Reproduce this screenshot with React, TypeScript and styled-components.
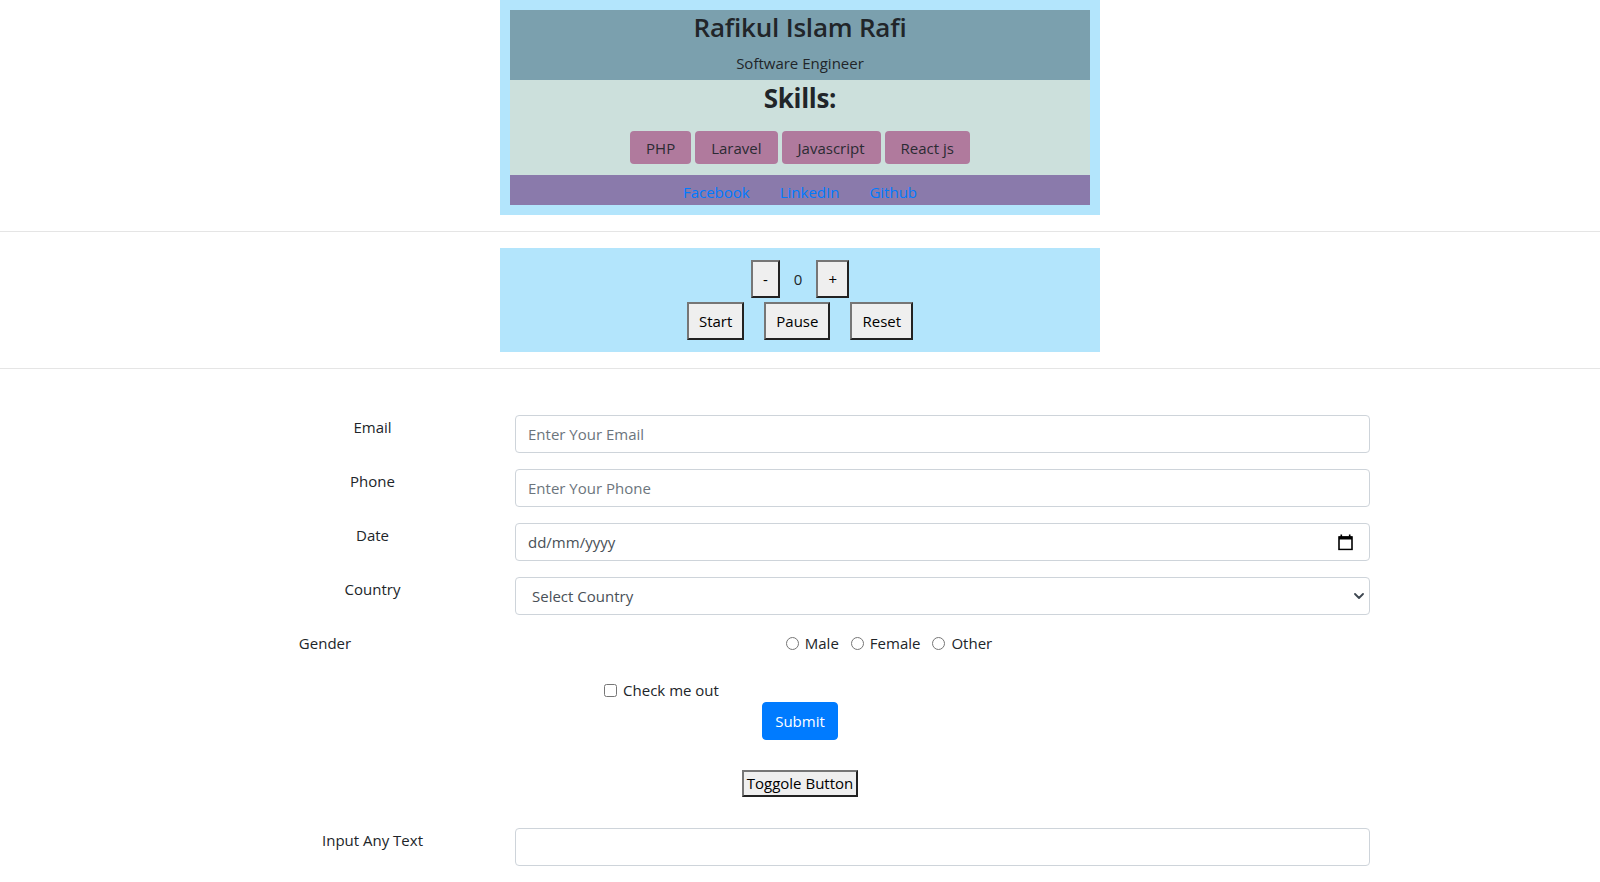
import styled, { createGlobalStyle, css } from 'styled-components';

const GlobalStyle = createGlobalStyle`
  *, *::before, *::after {
    box-sizing: border-box;
  }
  body {
    margin: 0;
    background: #fff;
    color: #212529;
    font-family: "Open Sans", "Liberation Sans", sans-serif;
    font-size: 15px;
    line-height: 24px;
  }
`;

const Page = styled.div`
  width: 100%;
`;

/* profile card */

const ProfileCard = styled.section`
  width: 600px;
  margin: 0 auto;
  padding: 10px;
  background: #b3e5fc;
`;

const CardHeader = styled.header`
  background: #7ba0ae;
  text-align: center;
  padding-bottom: 5px;
`;

const Name = styled.h3`
  margin: 0;
  font-size: 26px;
  font-weight: 600;
  line-height: 35px;
  letter-spacing: -0.2px;
`;

const Role = styled.p`
  margin: 6px 0 0;
  line-height: 24px;
`;

const SkillsBlock = styled.div`
  background: #cce0dc;
  text-align: center;
  padding-bottom: 11px;
`;

const SkillsTitle = styled.h3`
  margin: 0;
  font-size: 26px;
  font-weight: 700;
  line-height: 36px;
  letter-spacing: -0.3px;
`;

const SkillList = styled.div`
  display: flex;
  justify-content: center;
  gap: 4px;
  margin-top: 15px;
`;

const SkillTag = styled.span`
  height: 33px;
  padding: 1px 16px 0;
  border-radius: 4px;
  background: #b07a9d;
  color: #2b2b33;
  line-height: 33px;
`;

const LinkBar = styled.nav`
  display: flex;
  justify-content: center;
  gap: 30px;
  padding: 5px 0 1px;
  background: #8a7aab;
`;

const SocialLink = styled.a`
  color: #007bff;
  text-decoration: none;
`;

const Divider = styled.hr`
  height: 0;
  margin: 16px 0;
  border: 0;
  border-top: 1px solid rgba(0, 0, 0, 0.1);
`;

/* counter */

const CounterPanel = styled.section`
  width: 600px;
  margin: 0 auto;
  padding: 12px 0;
  background: #b3e5fc;
  display: flex;
  flex-direction: column;
  align-items: center;
  gap: 4px;
`;

const CounterRow = styled.div<{ $gap: number }>`
  display: flex;
  align-items: center;
  gap: ${p => p.$gap}px;
`;

const ClassicButton = styled.button`
  font-family: inherit;
  font-size: 15px;
  line-height: 24px;
  padding: 5px 10px;
  background: #efefef;
  color: #000;
  border: 2px solid;
  border-color: #767676 #222 #222 #767676;
  border-radius: 0;
`;

const Count = styled.span`
  color: #212529;
`;

/* form */

const Form = styled.form`
  width: 1140px;
  margin: 0 auto;
  padding-top: 30px;
`;

const FieldRow = styled.div<{ $space?: number }>`
  display: flex;
  align-items: flex-start;
  margin-bottom: ${p => p.$space ?? 16}px;
`;

const FieldLabel = styled.label<{ $width?: number }>`
  flex: 0 0 ${p => p.$width ?? 285}px;
  text-align: center;
  line-height: 24px;
`;

const Control = styled.div`
  position: relative;
  flex: 1;
`;

const fieldCss = css`
  display: block;
  width: 100%;
  height: 38px;
  padding: 6px 12px;
  font-family: inherit;
  font-size: 15px;
  line-height: 24px;
  color: #495057;
  background: #fff;
  border: 1px solid #ced4da;
  border-radius: 4px;
  outline: none;
  &::placeholder {
    color: #6c757d;
  }
`;

const TextInput = styled.input`
  ${fieldCss}
`;

const SelectBox = styled.select`
  ${fieldCss}
  appearance: none;
  padding-left: 16px;
`;

const FieldIcon = styled.span<{ $right: number }>`
  position: absolute;
  top: 50%;
  right: ${p => p.$right}px;
  display: flex;
  transform: translateY(-50%);
  pointer-events: none;
`;

const RadioGroup = styled.div`
  flex: 1;
  display: flex;
  justify-content: center;
  align-items: center;
`;

const RadioOption = styled.label<{ $last?: boolean }>`
  display: inline-flex;
  align-items: center;
  margin-right: ${p => (p.$last ? 0 : 12)}px;
`;

const Tick = styled.input`
  width: 13px;
  height: 13px;
  margin: 0 6px 0 0;
`;

const CheckRow = styled.div`
  width: 863px;
  display: flex;
  justify-content: center;
  align-items: center;
`;

const CenterRow = styled.div<{ $space: number }>`
  display: flex;
  justify-content: center;
  margin-bottom: ${p => p.$space}px;
`;

const PrimaryButton = styled.button`
  padding: 6px 12px;
  font-family: inherit;
  font-size: 15px;
  line-height: 24px;
  color: #fff;
  background: #007bff;
  border: 1px solid #007bff;
  border-radius: 4px;
`;

const ToggleButton = styled(ClassicButton)`
  padding: 1px 3px;
  line-height: 21px;
`;

const CalendarIcon = () => (
  <svg width="15" height="17" viewBox="0 0 15 17">
    <rect x="1" y="3.5" width="13" height="12.5" fill="none" stroke="#000" strokeWidth="1.6" />
    <rect x="1" y="3" width="13" height="3" fill="#000" />
    <rect x="2.5" y="1" width="1.6" height="3" fill="#000" />
    <rect x="10.9" y="1" width="1.6" height="3" fill="#000" />
  </svg>
);

const ChevronIcon = () => (
  <svg width="10" height="6" viewBox="0 0 10 6">
    <path d="M1 1l4 4 4-4" fill="none" stroke="#3d4650" strokeWidth="1.8" strokeLinecap="round" strokeLinejoin="round" />
  </svg>
);

const skills = ['PHP', 'Laravel', 'Javascript', 'React js'];
const links = ['Facebook', 'LinkedIn', 'Github'];
const genders = ['Male', 'Female', 'Other'];

export default function App() {
  return (
    <Page>
      <GlobalStyle />
      <ProfileCard>
        <CardHeader>
          <Name>Rafikul Islam Rafi</Name>
          <Role>Software Engineer</Role>
        </CardHeader>
        <SkillsBlock>
          <SkillsTitle>Skills:</SkillsTitle>
          <SkillList>
            {skills.map(s => (
              <SkillTag key={s}>{s}</SkillTag>
            ))}
          </SkillList>
        </SkillsBlock>
        <LinkBar>
          {links.map(l => (
            <SocialLink key={l} href="#">
              {l}
            </SocialLink>
          ))}
        </LinkBar>
      </ProfileCard>

      <Divider />

      <CounterPanel>
        <CounterRow $gap={14}>
          <ClassicButton>-</ClassicButton>
          <Count>0</Count>
          <ClassicButton>+</ClassicButton>
        </CounterRow>
        <CounterRow $gap={20}>
          <ClassicButton>Start</ClassicButton>
          <ClassicButton>Pause</ClassicButton>
          <ClassicButton>Reset</ClassicButton>
        </CounterRow>
      </CounterPanel>

      <Divider />

      <Form onSubmit={e => e.preventDefault()}>
        <FieldRow>
          <FieldLabel htmlFor="email">Email</FieldLabel>
          <Control>
            <TextInput id="email" type="email" placeholder="Enter Your Email" />
          </Control>
        </FieldRow>
        <FieldRow>
          <FieldLabel htmlFor="phone">Phone</FieldLabel>
          <Control>
            <TextInput id="phone" type="text" placeholder="Enter Your Phone" />
          </Control>
        </FieldRow>
        <FieldRow>
          <FieldLabel htmlFor="date">Date</FieldLabel>
          <Control>
            <TextInput id="date" type="text" defaultValue="dd/mm/yyyy" readOnly />
            <FieldIcon $right={17}>
              <CalendarIcon />
            </FieldIcon>
          </Control>
        </FieldRow>
        <FieldRow>
          <FieldLabel htmlFor="country">Country</FieldLabel>
          <Control>
            <SelectBox id="country" defaultValue="">
              <option value="">Select Country</option>
              <option value="bd">Bangladesh</option>
              <option value="in">India</option>
            </SelectBox>
            <FieldIcon $right={6}>
              <ChevronIcon />
            </FieldIcon>
          </Control>
        </FieldRow>
        <FieldRow $space={23}>
          <FieldLabel as="span" $width={190}>
            Gender
          </FieldLabel>
          <RadioGroup>
            {genders.map(g => (
              <RadioOption key={g}>
                <Tick type="radio" name="gender" value={g} />
                {g}
              </RadioOption>
            ))}
          </RadioGroup>
        </FieldRow>
        <CheckRow>
          <RadioOption $last>
            <Tick type="checkbox" />
            Check me out
          </RadioOption>
        </CheckRow>
        <CenterRow $space={30}>
          <PrimaryButton type="submit">Submit</PrimaryButton>
        </CenterRow>
        <CenterRow $space={31}>
          <ToggleButton type="button">Toggole Button</ToggleButton>
        </CenterRow>
        <FieldRow>
          <FieldLabel htmlFor="anytext">Input Any Text</FieldLabel>
          <Control>
            <TextInput id="anytext" type="text" />
          </Control>
        </FieldRow>
      </Form>
    </Page>
  );
}
